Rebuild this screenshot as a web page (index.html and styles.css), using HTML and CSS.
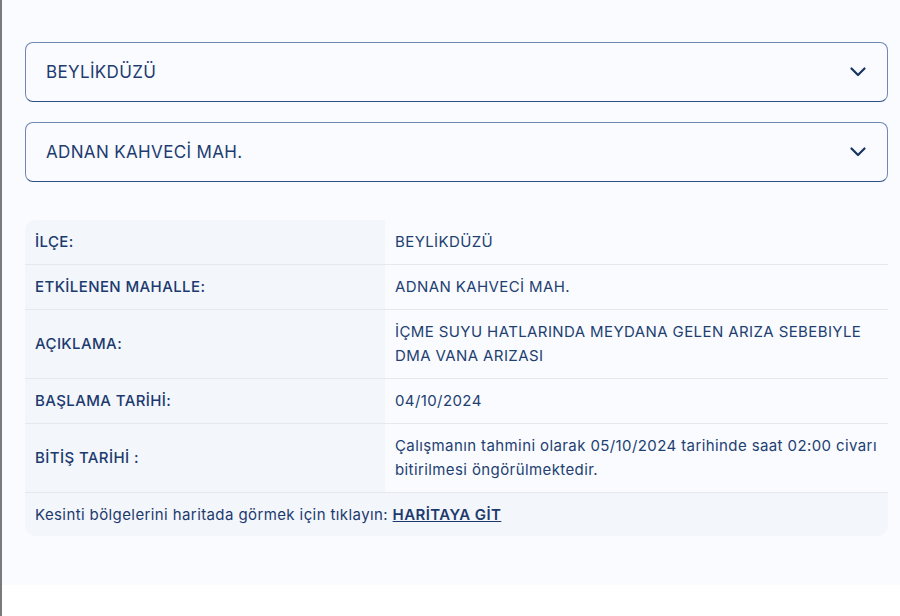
FILE: index.html
```html
<!DOCTYPE html>
<html lang="tr">
<head>
    <meta charset="UTF-8">
    <meta name="viewport" content="width=device-width, initial-scale=1.0">
    <title>Planlı Kesintiler</title>
    <link rel="stylesheet" href="styles.css">
</head>
<body>
    <div class="frame">
        <div class="panel">
            <div class="select">
                <span>BEYLİKDÜZÜ</span>
                <svg class="chevron" viewBox="0 0 16 10" width="16" height="10"><path d="M1.5 1.5 L8 8 L14.5 1.5" fill="none" stroke="#17335f" stroke-width="2.2" stroke-linecap="round" stroke-linejoin="round"/></svg>
            </div>
            <div class="select">
                <span>ADNAN KAHVECİ MAH.</span>
                <svg class="chevron" viewBox="0 0 16 10" width="16" height="10"><path d="M1.5 1.5 L8 8 L14.5 1.5" fill="none" stroke="#17335f" stroke-width="2.2" stroke-linecap="round" stroke-linejoin="round"/></svg>
            </div>

            <div class="details">
                <div class="row">
                    <div class="label">İLÇE:</div>
                    <div class="value">BEYLİKDÜZÜ</div>
                </div>
                <div class="row">
                    <div class="label">ETKİLENEN MAHALLE:</div>
                    <div class="value">ADNAN KAHVECİ MAH.</div>
                </div>
                <div class="row">
                    <div class="label">AÇIKLAMA:</div>
                    <div class="value">İÇME SUYU HATLARINDA MEYDANA GELEN ARIZA SEBEBIYLE DMA VANA ARIZASI</div>
                </div>
                <div class="row">
                    <div class="label">BAŞLAMA TARİHİ:</div>
                    <div class="value">04/10/2024</div>
                </div>
                <div class="row">
                    <div class="label">BİTİŞ TARİHİ :</div>
                    <div class="value">Çalışmanın tahmini olarak 05/10/2024 tarihinde saat 02:00 civarı bitirilmesi öngörülmektedir.</div>
                </div>
                <div class="map-row">
                    Kesinti bölgelerini haritada görmek için tıklayın: <a href="#">HARİTAYA GİT</a>
                </div>
            </div>
        </div>
    </div>
</body>
</html>
```

FILE: styles.css
```css
body {
    margin: 0;
    background-color: #ffffff;
    font-family: Inter, "Noto Sans", Arial, sans-serif;
    color: #1c3a6e;
}
.frame {
    border-left: 2px solid #7a7a7a;
    min-height: 616px;
    box-sizing: border-box;
}
.panel {
    background-color: #fafbfe;
    height: 585px;
    box-sizing: border-box;
    padding: 42px 12px 0 23px;
}
.select {
    height: 60px;
    box-sizing: border-box;
    border: 1px solid #6f88b6;
    border-bottom-color: #2d4f86;
    border-radius: 8px;
    display: flex;
    align-items: center;
    justify-content: space-between;
    padding: 0 21px 0 20px;
    margin-bottom: 20px;
    font-size: 17px;
    letter-spacing: 0.35px;
    color: #1e3c72;
}
.chevron {
    display: block;
}
.details {
    margin-top: 38px;
    border-radius: 10px;
    overflow: hidden;
    font-size: 15px;
    letter-spacing: 0.4px;
}
.row {
    display: grid;
    grid-template-columns: 360px 1fr;
    border-bottom: 1px solid #e6e8ed;
}
.label {
    background-color: #f3f6fb;
    padding: 10px 10px;
    line-height: 24px;
    font-weight: 500;
    display: flex;
    align-items: center;
}
.value {
    padding: 10px 10px;
    line-height: 24px;
    color: #223f72;
}
.map-row {
    background-color: #f3f6fb;
    padding: 10px 10px 10px;
    line-height: 23px;
}
.map-row a {
    color: #1c3a6e;
    font-weight: 600;
    text-decoration: underline;
}
```
